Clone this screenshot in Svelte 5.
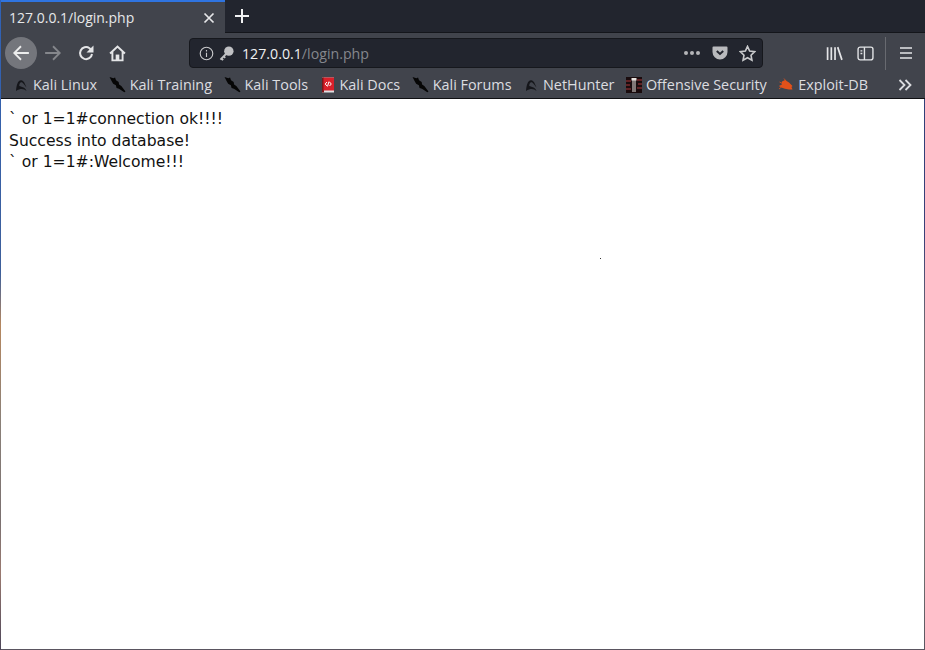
<script>
  const bookmarks = [
    { label: 'Kali Linux', icon: 'dragon' },
    { label: 'Kali Training', icon: 'sword' },
    { label: 'Kali Tools', icon: 'sword' },
    { label: 'Kali Docs', icon: 'docs' },
    { label: 'Kali Forums', icon: 'sword' },
    { label: 'NetHunter', icon: 'dragon' },
    { label: 'Offensive Security', icon: 'offsec' },
    { label: 'Exploit-DB', icon: 'bug' }
  ];
</script>

<div class="window">
  <div class="tabbar">
    <div class="tab">
      <span class="tab-title">127.0.0.1/login.php</span>
      <svg class="close" viewBox="0 0 12 12" width="12" height="12"><path d="M1.500 1.500l9 9M10.500 1.500l-9 9" /></svg>
    </div>
    <svg class="newtab" viewBox="0 0 14 14" width="14" height="14"><path d="M7 0v14M0 7h14" /></svg>
  </div>

  <div class="toolbar">
    <div class="nav-buttons">
      <button class="back" aria-label="Back">
        <svg viewBox="0 0 16 16" width="18" height="18"><path d="M15 8H2M8 2L2 8l6 6" /></svg>
      </button>
      <svg class="forward" viewBox="0 0 16 16" width="18" height="18"><path d="M1 8h13M8 2l6 6-6 6" /></svg>
      <svg class="ico reload" viewBox="0 0 16 16" width="16" height="16"><path d="M14 9A6 6 0 1 1 11.500 3.200L14 5.500" /><path class="fill" d="M15.500 .5v7H8.500z" /></svg>
      <svg class="ico home" viewBox="0 0 16 16" width="17" height="17"><path d="M1 8l7-6.500L15 8M3.200 6.500v8h9.600v-8" /><path class="fill" d="M6.300 9h3.400v5.500H6.300z" /></svg>
    </div>

    <div class="urlbar">
      <svg class="info" viewBox="0 0 16 16" width="15" height="15"><circle cx="8" cy="8" r="6.700" /><path d="M8 7.200v4.600M8 4.200v1.600" /></svg>
      <svg class="key" viewBox="0 0 16 16" width="15" height="15"><circle class="fill" cx="10.500" cy="5.500" r="5" /><path d="M8.500 7.500L1.500 14.500M2.500 13.500l2 1.500M5 11l1.600 1.600" /></svg>
      <span class="url"><span class="host">127.0.0.1</span><span class="path">/login.php</span></span>
      <span class="dots"><i></i><i></i><i></i></span>
      <svg class="pocket" viewBox="0 0 16 16" width="16" height="16"><path class="fill" d="M1.500 1.500h13a1 1 0 0 1 1 1V7a7.500 7.500 0 0 1-15 0V2.500a1 1 0 0 1 1-1z" /><path class="notch" d="M4.800 6L8 9l3.200-3" /></svg>
      <svg class="star" viewBox="0 0 16 16" width="17" height="17"><path d="M8 1.300l2 4.400 4.800.6-3.500 3.300.9 4.800L8 12l-4.200 2.400.9-4.800L1.200 6.300l4.800-.6z" /></svg>
    </div>

    <div class="right-tools">
      <svg class="ico library" viewBox="0 0 16 16" width="17" height="17"><path d="M1.500 2v12M5 2v12M8.500 2v12M11 2l4 12" /></svg>
      <svg class="ico sidebar" viewBox="0 0 16 16" width="17" height="17"><rect x="1" y="2" width="14" height="12" rx="2" /><path d="M7 2v12M3.300 5.500h1.700M3.300 8h1.700" /></svg>
      <span class="divider"></span>
      <svg class="ico menu" viewBox="0 0 14 14" width="14" height="14"><path d="M1 2h12M1 7h12M1 12h12" /></svg>
    </div>
  </div>

  <div class="bookmarks">
    {#each bookmarks as b}
      <div class="bookmark">
        {#if b.icon === 'dragon'}
          <svg class="fav" viewBox="0 0 16 16" width="16" height="16"><path class="dragon" d="M3 14C3.500 8.500 4.500 3.500 8 3.200c2.800-.2 4 3.800 5.500 7.300-1.500-1.200-2.700-4-4.500-5.200-1.800-.6-3 1.800-2.700 3.700 1.800 1 5.700.8 7.200 5-2.500-2.400-6-3-10.500 0z" /></svg>
        {:else if b.icon === 'sword'}
          <svg class="fav" viewBox="0 0 16 16" width="17" height="17"><path class="blade" d="M.5 1l3.600 1 1.600-.6.900 2.600 2.500 1.700.4 2.300 2.100 1.500 3.900 5-1.100.8-5-3.300-2.300-.8-.6-2.500-2.600-1.500L2.400 4.800z" /></svg>
        {:else if b.icon === 'docs'}
          <svg class="fav" viewBox="0 0 16 16" width="16" height="16"><rect x="2" y="0.500" width="12" height="15" fill="#dfe0e2" /><rect x="2" y="0.500" width="2" height="15" fill="#7d1418" /><rect x="3.500" y="0.500" width="10.500" height="13" fill="#d9202a" /><path d="M7 5L5.200 7 7 9M9.500 5l1.800 2-1.800 2M9 4.500L7.500 9.500" fill="none" stroke="#fff" stroke-width="1" /></svg>
        {:else if b.icon === 'offsec'}
          <svg class="fav" viewBox="0 0 16 16" width="16" height="16"><rect width="16" height="16" fill="#1a0c0e" /><path d="M0 4h5M0 8h4M0 12h5M11 3h5M12 7h4M11 11h5" stroke="#7a2a2e" stroke-width="1.500" /><path d="M5.500 1h5v2.500H9.500V15H8.500V3.500h-1V15h-1V3.500h-1z" fill="#e8e4e0" /></svg>
        {:else}
          <svg class="fav" viewBox="0 0 16 16" width="16" height="16"><path d="M4 4.500l3-1.500 4 2.500 3.500 3.500-1 1 1 2.500-3.500 0-4-.8-3-1-3.300-1.700 3-1.200z" fill="#e2511a" /><path d="M1.500 5l3 1.500M1 12l3-2.500M6 1.500l2 2.500" stroke="#e2511a" stroke-width=".8" /></svg>
        {/if}
        <span>{b.label}</span>
      </div>
    {/each}
    <svg class="more" viewBox="0 0 14 12" width="14" height="12"><path d="M1.500 1l5 5-5 5M7.500 1l5 5-5 5" /></svg>
  </div>

  <main class="page">
    <div>` or 1=1#connection ok!!!!</div>
    <div>Success into database!</div>
    <div>` or 1=1#:Welcome!!!</div>
    <span class="speck"></span>
  </main>
</div>

<style>
  :global(body) {
    margin: 0;
    background: #22252e;
  }
  .window {
    position: relative;
    box-sizing: border-box;
    width: 925px;
    height: 650px;
    display: flex;
    flex-direction: column;
    border-left: 1px solid;
    border-image: linear-gradient(180deg, #2f62b8 0%, #3d5f9a 42%, #b5875f 50%, #8a8078 65%, #7a7070 80%, #9a7a70 88%, #4a4458 100%) 1;
    font-family: "Open Sans", "Noto Sans", sans-serif;
    font-size: 14px;
    color: #e4e5e7;
    overflow: hidden;
  }
  svg {
    display: block;
    flex: none;
    fill: none;
    stroke: currentColor;
    stroke-width: 1.600;
  }
  svg .fill {
    fill: currentColor;
    stroke: none;
  }
  svg.fav {
    stroke: none;
  }
  .tabbar {
    height: 33px;
    flex: none;
    box-sizing: border-box;
    display: flex;
    align-items: flex-start;
    background: #22252e;
    border-bottom: 1px solid #14161b;
  }
  .tab {
    box-sizing: border-box;
    width: 224px;
    height: 33px;
    flex: none;
    display: flex;
    align-items: center;
    justify-content: space-between;
    padding: 0 10px 0 8px;
    background: #41444c;
    border-top: 2px solid #2f74e0;
    color: #e6e7e9;
  }
  .close {
    stroke-width: 1.700;
  }
  .newtab {
    margin: 9px 0 0 10px;
    color: #f0f1f2;
    stroke-width: 2;
  }
  .toolbar {
    height: 40px;
    flex: none;
    display: flex;
    align-items: center;
    background: #41444c;
  }
  .nav-buttons {
    display: flex;
    align-items: center;
    width: 188px;
    flex: none;
    padding-left: 4px;
    box-sizing: border-box;
  }
  .back {
    width: 32px;
    height: 32px;
    border: 0;
    border-radius: 50%;
    padding: 0;
    display: flex;
    align-items: center;
    justify-content: center;
    background: #74767c;
    color: #eceded;
  }
  .forward {
    color: #85878c;
    margin-left: 7px;
  }
  .reload {
    margin-left: 16px;
    color: #e4e5e7;
    stroke-width: 2;
  }
  .home {
    margin-left: 15px;
    color: #e4e5e7;
    stroke-width: 1.800;
  }
  .urlbar {
    box-sizing: border-box;
    width: 574px;
    height: 30px;
    display: flex;
    align-items: center;
    background: #22252e;
    border: 1px solid #16181d;
    border-radius: 4px;
    padding: 0 6px 0 9px;
    color: #c9cacc;
  }
  .info {
    stroke-width: 1.200;
  }
  .key {
    margin-left: 5px;
    color: #c0c1c4;
    stroke-width: 2;
  }
  .url {
    margin-left: 8px;
    flex: 1;
    font-size: 14.200px;
  }
  .host {
    color: #f0f1f2;
  }
  .path {
    color: #85878d;
  }
  .dots {
    display: flex;
    gap: 2px;
    margin-right: 12px;
  }
  .dots i {
    width: 4px;
    height: 4px;
    border-radius: 50%;
    background: #b4b5b8;
  }
  .pocket {
    color: #b9babd;
  }
  .pocket .notch {
    stroke: #22252e;
    stroke-width: 2;
  }
  .star {
    margin-left: 11px;
    stroke-width: 1.500;
  }
  .right-tools {
    flex: 1;
    display: flex;
    align-items: center;
    padding-left: 63px;
  }
  .sidebar {
    margin-left: 14px;
    stroke-width: 1.300;
  }
  .divider {
    width: 1px;
    height: 33px;
    margin-left: 11px;
    background: #686a70;
  }
  .menu {
    margin-left: 13px;
  }
  .bookmarks {
    box-sizing: border-box;
    height: 26px;
    flex: none;
    display: flex;
    align-items: center;
    padding: 0 0 2px 12px;
    background: #41444c;
    border-bottom: 1px solid #0f1013;
  }
  .bookmark {
    display: flex;
    align-items: center;
    gap: 4px;
    margin-right: 11.500px;
    white-space: nowrap;
    color: #dcdde0;
    font-size: 14.400px;
  }
  .dragon {
    fill: #15161a;
    stroke: none;
  }
  .blade {
    fill: #060606;
    stroke: none;
  }
  .more {
    position: absolute;
    left: 897px;
    top: 79px;
    color: #dcdde0;
    stroke-width: 1.800;
  }
  .page {
    position: relative;
    flex: 1;
    background: #fff;
    padding: 10px 0 0 8px;
    font-family: "DejaVu Sans", sans-serif;
    font-size: 15.600px;
    line-height: 21.500px;
    color: #111;
    border-style: solid;
    border-width: 0 1px 1px 0;
    border-image: linear-gradient(180deg, #2e3f78 0%, #3a3f78 25%, #6f6a72 42%, #8a7a78 60%, #6f6f70 85%, #5a5560 100%) 1;
  }
  .speck {
    position: absolute;
    left: 599px;
    top: 159px;
    width: 1px;
    height: 1px;
    background: #333;
  }
</style>
